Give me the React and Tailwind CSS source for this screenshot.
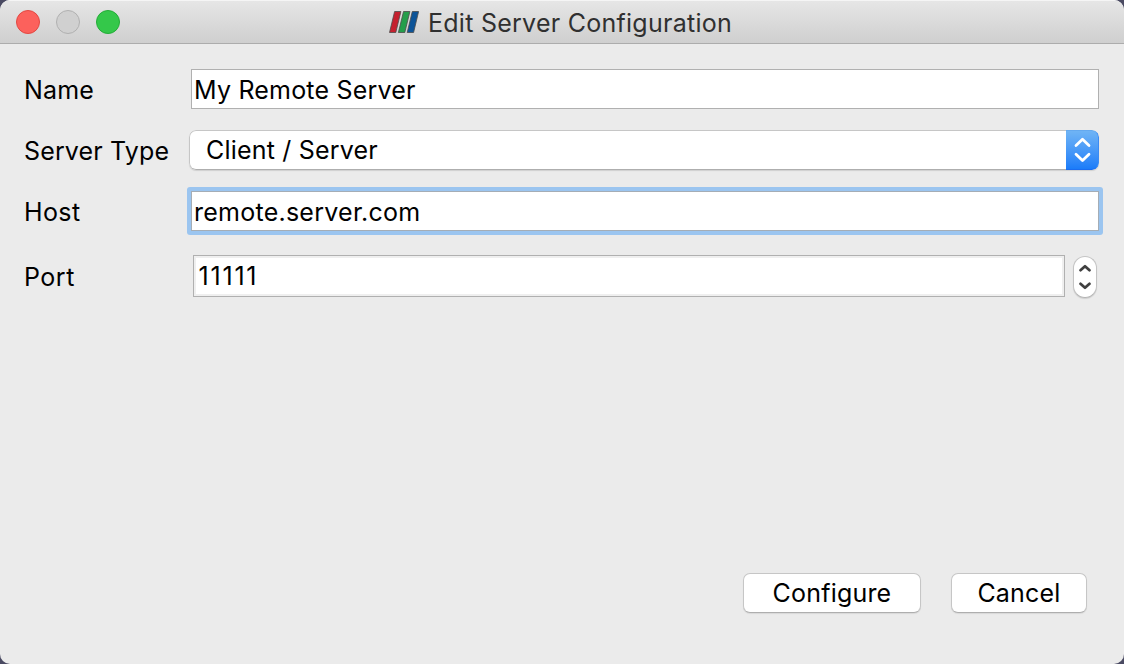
function Logo() {
  return (
    <svg className="mt-[11px] h-[22px] w-[30px]" viewBox="0 0 30 22" stroke="#4b4b4b" strokeWidth="0.8">
      <path d="M5.6 .5H11.9L6.8 21.5H.5Z" fill="#c4202e" />
      <path d="M14.5 .5H20.9L15.8 21.5H9.4Z" fill="#259e4b" />
      <path d="M23.3 .5H29.6L24.6 21.5H18.2Z" fill="#0d5498" />
    </svg>
  );
}

function Chevrons({ className, up, down, width }) {
  return (
    <svg className={className} viewBox="0 0 24 40" fill="none" stroke="currentColor" strokeWidth={width} strokeLinecap="round" strokeLinejoin="round">
      <path d={up} />
      <path d={down} />
    </svg>
  );
}

function Label({ children, className }) {
  return <label className={`block w-[167px] shrink-0 whitespace-nowrap leading-[30px] ${className}`}>{children}</label>;
}

function PushButton({ children, className }) {
  return (
    <button className={`h-10 rounded-[7px] border border-[#c6c6c6] border-b-[#aeaeae] bg-white pb-px leading-[30px] shadow-[0_1px_1px_rgba(0,0,0,0.08)] ${className}`}>
      {children}
    </button>
  );
}

export default function App() {
  return (
    <div className="h-[664px] w-[1124px] overflow-hidden bg-[#4a4a62] font-['Inter','Liberation_Sans',sans-serif] text-[25px] tracking-[0.2px] text-black">
      <div className="flex h-full flex-col overflow-hidden rounded-[10px] bg-[#ebebeb]">
        <header className="flex h-11 shrink-0 border-t border-b border-t-[#f5f5f5] border-b-[#acacac] bg-linear-to-b from-[#e6e6e6] to-[#cfcfcf]">
          <div className="flex w-[389px] gap-4 pt-[9px] pl-4">
            <span className="size-6 rounded-full border border-[#e24842] bg-[#fc615c]" />
            <span className="size-6 rounded-full border border-[#b0b0b0] bg-[#d0d0d0]" />
            <span className="size-6 rounded-full border border-[#24ac38] bg-[#34c84a]" />
          </div>
          <div className="-mt-px flex">
            <Logo />
            <h1 className="ml-[9px] pt-2 leading-[30px] tracking-[0.26px] whitespace-nowrap text-[#303030]">Edit Server Configuration</h1>
          </div>
        </header>
        <main className="flex flex-1 flex-col pt-[25px] pl-6">
          <div className="flex h-10">
            <Label className="pt-1.5">Name</Label>
            <div className="w-[908px] border border-[#b0b0b0] bg-white pt-[5px] pl-[2px] leading-[30px]">My Remote Server</div>
          </div>
          <div className="mt-[21px] flex h-10">
            <Label className="-mr-[2px] pt-1.5 tracking-[0.15px]">Server Type</Label>
            <div className="flex w-[910px] overflow-hidden rounded-[7px] shadow-[0_1px_1px_rgba(0,0,0,0.12)]">
              <div className="flex-1 rounded-l-[7px] border border-r-0 border-[#c6c6c6] border-b-[#aeaeae] bg-white pt-1 pl-4 leading-[30px]">Client / Server</div>
              <div className="flex w-[33px] justify-center rounded-r-[7px] border border-l-0 border-t-[#64a9ef] border-r-[#3c8bf3] border-b-[#1a6df0] bg-linear-to-b from-[#6fb4f5] to-[#1a7cf9] text-white">
                <Chevrons className="-mt-px h-10 w-6" width="2.8" up="M6 15.5L12.5 9.3L19 15.5" down="M6 24.2L12.5 30.6L19 24.2" />
              </div>
            </div>
          </div>
          <div className="mt-[21px] flex h-10">
            <Label className="pt-1.5 tracking-[0.4px]">Host</Label>
            <div className="-m-1 h-12 w-[916px] rounded-[3px] bg-[#9bc5f0] p-1">
              <div className="h-10 border border-[#a5adb5] bg-white pt-[5px] pl-[2px] leading-[30px] tracking-[0.25px]">remote.server.com</div>
            </div>
          </div>
          <div className="mt-6 flex h-[43px]">
            <Label className="mr-[2px] pt-[7px] tracking-[0.5px]">Port</Label>
            <div className="h-[42px] w-[872px] border border-[#b0b0b0] bg-white pt-[5px] pl-[4.5px] leading-[30px] tracking-[1.8px] shadow-[inset_0_0_0_2px_#efefef]">11111</div>
            <div className="mt-px ml-2 flex h-[42px] w-6 justify-center rounded-xl border border-[#c4c4c4] border-b-[#b4b4b4] bg-white text-[#404040] shadow-[0_1px_1px_rgba(0,0,0,0.12)]">
              <Chevrons className="h-10 w-6 shrink-0" width="2.8" up="M7.5 13.2L12 9.3L16.5 13.2" down="M7.5 26.8L12 30.7L16.5 26.8" />
            </div>
          </div>
        </main>
        <footer className="flex justify-end gap-[30px] pr-[37px] pb-[51px]">
          <PushButton className="w-[178px]">Configure</PushButton>
          <PushButton className="w-[136px]">Cancel</PushButton>
        </footer>
      </div>
    </div>
  );
}
